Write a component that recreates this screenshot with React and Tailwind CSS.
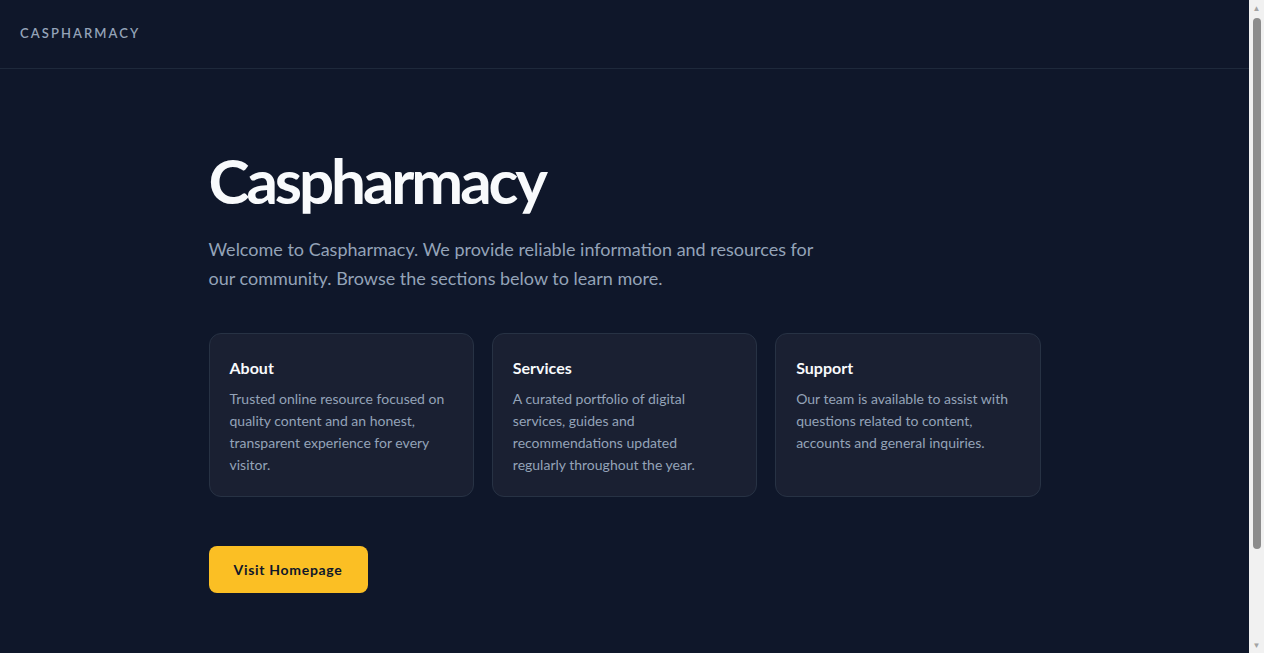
export default function App() {
  const cards = [
    {
      title: 'About',
      body: 'Trusted online resource focused on quality content and an honest, transparent experience for every visitor.',
    },
    {
      title: 'Services',
      body: 'A curated portfolio of digital services, guides and recommendations updated regularly throughout the year.',
    },
    {
      title: 'Support',
      body: 'Our team is available to assist with questions related to content, accounts and general inquiries.',
    },
  ]

  return (
    <div className="flex bg-[#0f172a]" style={{ fontFamily: '"Segoe UI", Lato, sans-serif' }}>
      <div className="flex-1 min-h-screen text-[#f8fafc]">
        {/* Top bar */}
        <header className="h-[69px] border-b border-[#1e293b] px-5 flex items-center">
          <span className="text-[13px] font-semibold tracking-[0.16em] text-[#94a3b8]">CASPHARMACY</span>
        </header>

        <main className="max-w-[832px] mx-auto pt-[76px] pb-[148px]">
          <h1 className="text-[62px] leading-[70px] font-bold tracking-tighter text-[#f8fafc]">Caspharmacy</h1>
          <p className="mt-5 max-w-[620px] text-lg leading-[29px] text-[#94a3b8]">
            Welcome to Caspharmacy. We provide reliable information and resources for our community. Browse the
            sections below to learn more.
          </p>

          {/* Sections */}
          <div className="mt-10 grid grid-cols-3 gap-[18px]">
            {cards.map((card) => (
              <div
                key={card.title}
                className="h-[164px] rounded-xl border border-[#273244] bg-[#1a2032] pl-5 pr-6 pt-[22px]"
              >
                <h2 className="text-base font-bold text-[#f8fafc]">{card.title}</h2>
                <p className="mt-2 text-sm leading-[22px] text-[#94a3b8]">{card.body}</p>
              </div>
            ))}
          </div>

          <button
            type="button"
            className="mt-[49px] h-[47px] px-[25px] rounded-lg bg-[#fbbf24] text-sm font-bold tracking-wider text-[#0f172a]"
          >
            Visit Homepage
          </button>
        </main>
      </div>

      {/* scrollbar gutter as in the screenshot */}
      <div className="sticky top-0 h-screen w-[15px] shrink-0 bg-[#f1f1f1] flex flex-col items-center">
        <div className="h-4 flex items-center text-[8px] text-[#a3a3a3]">▲</div>
        <div className="w-2 flex-1 mb-[88px] mt-[2px] rounded-full bg-[#8c8c8c]" />
        <div className="h-4 flex items-center text-[8px] text-[#a3a3a3]">▼</div>
      </div>
    </div>
  )
}
